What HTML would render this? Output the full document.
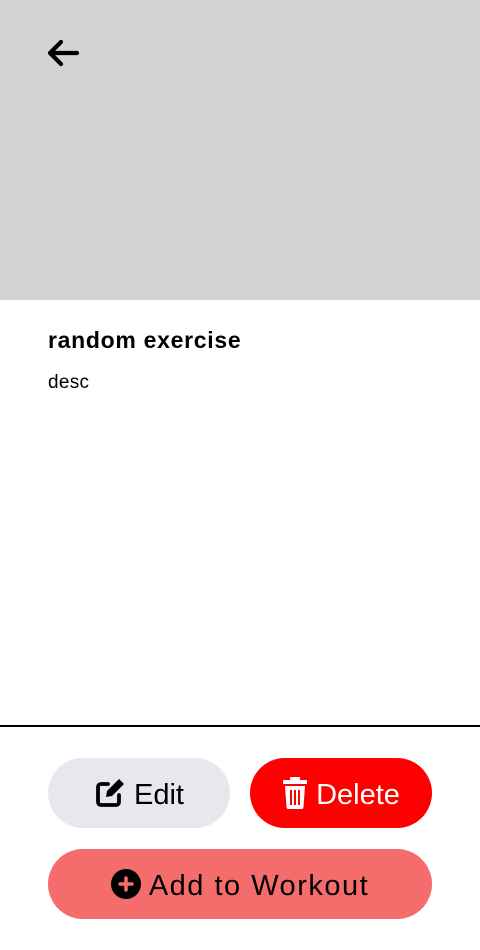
<!DOCTYPE html>
<html><head><style>
*{margin:0;padding:0;box-sizing:border-box}
body{width:480px;height:950px;background:#fff;font-family:"Liberation Sans","DejaVu Sans",sans-serif;position:relative;overflow:hidden}
.hero{position:absolute;left:0;top:0;width:480px;height:300px;background:#d3d3d3}
.back{position:absolute;left:46px;top:38px}
h1{position:absolute;left:48px;top:327px;font-size:23px;font-weight:bold;color:#000;letter-spacing:0.7px}
.desc{position:absolute;left:48px;top:372px;font-size:19px;color:#000;letter-spacing:0.3px}
.line{position:absolute;left:0;top:725px;width:480px;height:2px;background:#000}
.btn{position:absolute;height:70px;border-radius:35px;display:flex;align-items:center;justify-content:center;font-size:29px;gap:8px;padding-top:4px}
.edit{left:48px;top:758px;width:182px;background:#e8e7ed;color:#000}
.del{left:250px;top:758px;width:182px;background:#fe0000;color:#fff}
.add{left:48px;top:849px;width:384px;background:#f56c6c;color:#000;letter-spacing:1.5px}
.btn svg{margin-top:-4px}
</style></head><body>
<div class="hero"></div>
<svg class="back" width="34" height="30" viewBox="0 0 34 30"><path d="M31 15H5M15 4L4 15L15 26" fill="none" stroke="#000" stroke-width="4.2" stroke-linecap="round" stroke-linejoin="round"/></svg>
<h1>random exercise</h1>
<div class="desc">desc</div>
<div class="line"></div>
<div class="btn edit"><svg width="32" height="32" viewBox="0 0 32 32"><path d="M14 7H7a3 3 0 0 0-3 3v15a3 3 0 0 0 3 3h15a3 3 0 0 0 3-3v-7" fill="none" stroke="#000" stroke-width="3.8" stroke-linecap="round"/><path d="M12 20l1-6L25 2l5 5L18 19z" fill="#000"/></svg>Edit</div>
<div class="btn del"><svg width="26" height="32" viewBox="0 0 26 32"><rect x="1" y="3" width="24" height="4" rx="1" fill="#fff"/><rect x="8" y="0" width="10" height="4" rx="1" fill="#fff"/><path d="M3 9h20l-1.5 21a2 2 0 0 1-2 2H6.5a2 2 0 0 1-2-2z" fill="#fff"/><path d="M9 13v15M13 13v15M17 13v15" stroke="#fe0000" stroke-width="2"/></svg>Delete</div>
<div class="btn add"><svg width="30" height="30" viewBox="0 0 30 30"><circle cx="15" cy="15" r="15" fill="#000"/><path d="M15 9v12M9 15h12" stroke="#f56c6c" stroke-width="3.5" stroke-linecap="round"/></svg>Add to Workout</div>
</body></html>
